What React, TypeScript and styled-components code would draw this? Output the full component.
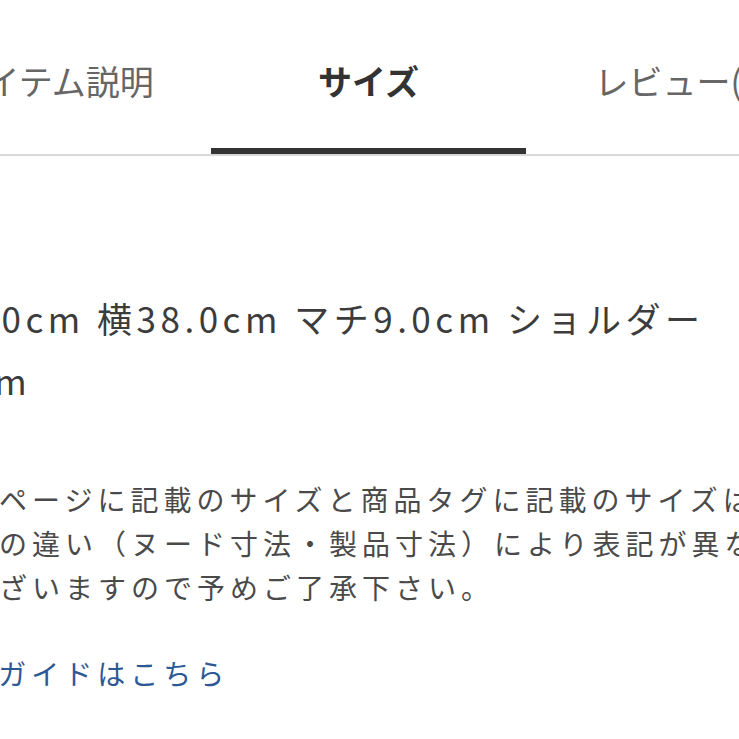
import React, { useState } from "react";
import styled, { createGlobalStyle } from "styled-components";

// Global

const GlobalStyle = createGlobalStyle`
  html, body {
    margin: 0;
    padding: 0;
    background: #ffffff;
  }
  body {
    font-family: "Noto Sans CJK JP", "Noto Sans", sans-serif;
    overflow: hidden;
  }
`;

// Styled Components

const Page = styled.div`
  width: 739px;
  height: 739px;
  overflow: hidden;
  background: #ffffff;
`;

const TabBar = styled.div`
  display: flex;
  flex-direction: row;
  margin-left: -104px;
  width: 1050px;
  border-bottom: 2px solid #d8d8d8;
`;

const Tab = styled.button<{ $active: boolean }>`
  position: relative;
  flex: 0 0 315px;
  height: 154px;
  padding: 6px 0 0;
  display: flex;
  align-items: center;
  justify-content: center;
  border: none;
  background: transparent;
  font-family: "Noto Sans CJK JP", sans-serif;
  font-size: 34px;
  font-weight: ${(p) => (p.$active ? 700 : 400)};
  color: ${(p) => (p.$active ? "#333333" : "#666666")};
  white-space: nowrap;
  cursor: pointer;

  &::after {
    content: "";
    position: absolute;
    left: 0;
    right: 0;
    bottom: 0;
    height: 6px;
    background: ${(p) => (p.$active ? "#333333" : "transparent")};
  }
`;

const Content = styled.div`
  margin-left: -100px;
  width: 940px;
  padding-top: 131px;
  font-family: "Noto Sans CJK JP", sans-serif;
`;

const Dimensions = styled.p`
  margin: 0;
  font-size: 35px;
  line-height: 62px;
  letter-spacing: 4.5px;
  color: #3c3c3c;
  white-space: nowrap;
`;

const Notice = styled.p`
  margin: 66px 0 0;
  font-size: 28px;
  line-height: 44px;
  letter-spacing: 5px;
  color: #4a4a4a;
`;

const GuideLink = styled.a`
  display: block;
  margin-top: 42px;
  font-size: 28px;
  line-height: 44px;
  letter-spacing: 5px;
  color: #2c5896;
  text-decoration: none;
`;

const TABS = ["アイテム説明", "サイズ", "レビュー(1)"];

function App() {
  const [active, setActive] = useState(1);

  return (
    <Page>
      <GlobalStyle />
      <TabBar>
        {TABS.map((label, i) => (
          <Tab key={label} $active={i === active} onClick={() => setActive(i)}>
            {label}
          </Tab>
        ))}
      </TabBar>
      <Content>
        <Dimensions>
          縦25.0cm 横38.0cm マチ9.0cm ショルダー
          <br />
          100cm
        </Dimensions>
        <Notice>
          ※商品ページに記載のサイズと商品タグに記載のサイズは、計測方法の違い（ヌード寸法・製品寸法）により表記が異なる場合がございますので予めご了承下さい。
        </Notice>
        <GuideLink href="#">サイズガイドはこちら</GuideLink>
      </Content>
    </Page>
  );
}

export default App;
